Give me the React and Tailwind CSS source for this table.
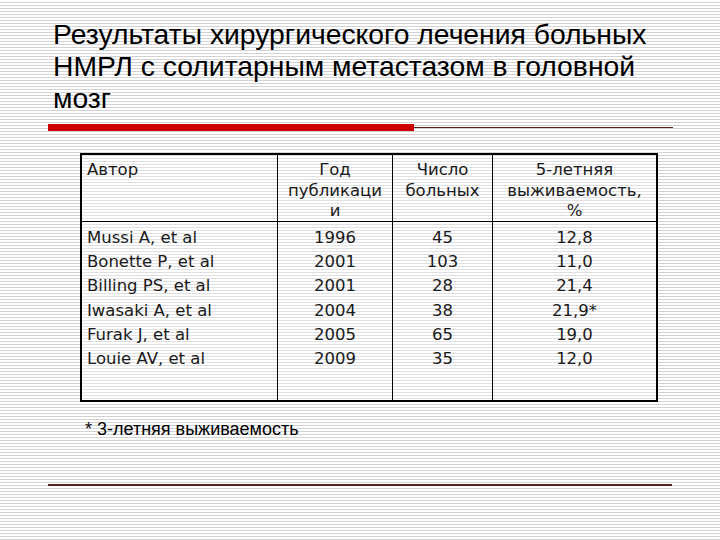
const rows = [
  ["Mussi A, et al", "1996", "45", "12,8"],
  ["Bonette P, et al", "2001", "103", "11,0"],
  ["Billing PS, et al", "2001", "28", "21,4"],
  ["Iwasaki A, et al", "2004", "38", "21,9*"],
  ["Furak J, et al", "2005", "65", "19,0"],
  ["Louie AV, et al", "2009", "35", "12,0"],
];

export default function App() {
  return (
    <div className="w-[720px] h-[540px] overflow-hidden bg-[repeating-linear-gradient(to_bottom,#ffffff_0px,#ffffff_2px,#d2d2d2_2px,#d2d2d2_3px)] text-[#1a1a1a]">
      <h1 className="pl-[53px] pt-[18px] font-['Liberation_Sans',Arial,sans-serif] text-[28.3px] leading-[32px] font-normal text-black">
        Результаты хирургического лечения больных
        <br />
        НМРЛ с солитарным метастазом в головной
        <br />
        мозг
      </h1>

      <div className="ml-[48px] mt-[10px] w-[625px] flex items-center">
        <div className="w-[366px] h-[7px] bg-[#cc0000]" />
        <div className="flex-1 h-px bg-[#5a1f1f]" />
      </div>

      <div className="ml-[80px] mt-[22px] w-[578px] h-[249px] border-2 border-black bg-white/30 font-['DejaVu_Sans',Verdana,sans-serif] text-[16.5px] flex flex-col">
        <div className="grid grid-cols-[196px_115px_100px_1fr] h-[67px] border-b border-black leading-[20.5px]">
          <div className="border-r border-black pl-[5px] pt-[5px]">Автор</div>
          <div className="border-r border-black text-center pt-[5px]">
            Год
            <br />
            публикаци
            <br />и
          </div>
          <div className="border-r border-black text-center pt-[5px]">
            Число
            <br />
            больных
          </div>
          <div className="text-center pt-[5px]">
            5-летняя
            <br />
            выживаемость,
            <br />%
          </div>
        </div>
        <div className="grid grid-cols-[196px_115px_100px_1fr] flex-1 leading-[24.2px]">
          <div className="border-r border-black pl-[5px] pt-[4px]">
            {rows.map((r) => (
              <div key={r[0]}>{r[0]}</div>
            ))}
          </div>
          <div className="border-r border-black text-center pt-[4px]">
            {rows.map((r, i) => (
              <div key={i}>{r[1]}</div>
            ))}
          </div>
          <div className="border-r border-black text-center pt-[4px]">
            {rows.map((r, i) => (
              <div key={i}>{r[2]}</div>
            ))}
          </div>
          <div className="text-center pt-[4px]">
            {rows.map((r, i) => (
              <div key={i}>{r[3]}</div>
            ))}
          </div>
        </div>
      </div>

      <p className="ml-[85px] mt-[16px] font-['Liberation_Sans',Arial,sans-serif] text-[18px] leading-[22px] text-black">
        * 3-летняя выживаемость
      </p>

      <div className="ml-[48px] mt-[44px] w-[624px] h-[2px] bg-[#5a1f1f]" />
    </div>
  );
}
